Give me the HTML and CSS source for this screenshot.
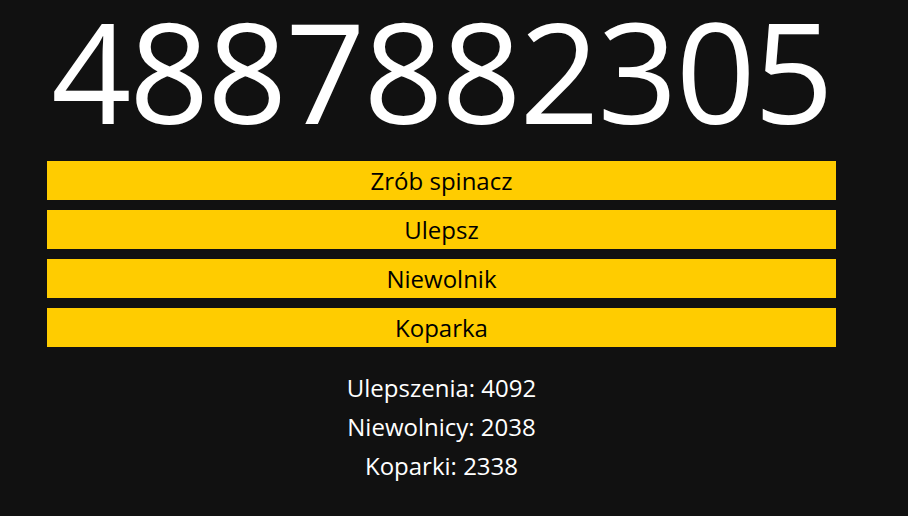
FILE: index.html
```html
<!DOCTYPE html>
<html lang="pl">
<head>
<meta charset="utf-8">
<title>Spinacze</title>
<link rel="stylesheet" href="styles.css">
</head>
<body>
<main class="app">
  <div class="counter">4887882305</div>
  <div class="actions">
    <button class="btn">Zrób spinacz</button>
    <button class="btn">Ulepsz</button>
    <button class="btn">Niewolnik</button>
    <button class="btn">Koparka</button>
  </div>
  <div class="stats">
    <div class="stat">Ulepszenia: 4092</div>
    <div class="stat">Niewolnicy: 2038</div>
    <div class="stat">Koparki: 2338</div>
  </div>
</main>
</body>
</html>
```

FILE: styles.css
```css
html, body {
  margin: 0;
  padding: 0;
  background: #111111;
  height: 100%;
}
body {
  font-family: "Open Sans", "Noto Sans", sans-serif;
  color: #ffffff;
  overflow: hidden;
}
.app {
  width: 883px;
  display: flex;
  flex-direction: column;
}
.counter {
  font-size: 140px;
  line-height: 140px;
  text-align: center;
  letter-spacing: -2px;
  color: #ffffff;
}
.actions {
  margin: 21px 47px 0;
  display: flex;
  flex-direction: column;
  gap: 10px;
}
.btn {
  display: block;
  width: 100%;
  height: 39px;
  padding: 0;
  border: 0;
  background: #ffcc00;
  color: #000000;
  font-family: inherit;
  font-size: 24px;
  font-weight: 500;
  line-height: 39px;
  text-align: center;
}
.stats {
  margin-top: 21px;
  text-align: center;
  font-size: 24px;
  font-weight: 500;
  line-height: 39px;
}
```
